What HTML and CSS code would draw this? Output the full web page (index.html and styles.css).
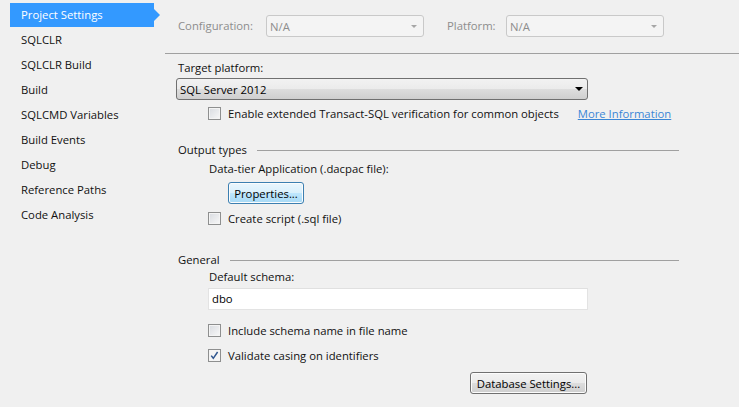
FILE: index.html
```html
<!DOCTYPE html>
<html>
<head>
<meta charset="utf-8">
<link rel="stylesheet" href="styles.css">
</head>
<body>
<div class="app">
  <nav class="sidebar">
    <div class="nav-item selected">Project Settings</div>
    <div class="nav-item">SQLCLR</div>
    <div class="nav-item">SQLCLR Build</div>
    <div class="nav-item">Build</div>
    <div class="nav-item">SQLCMD Variables</div>
    <div class="nav-item">Build Events</div>
    <div class="nav-item">Debug</div>
    <div class="nav-item">Reference Paths</div>
    <div class="nav-item">Code Analysis</div>
  </nav>
  <main class="main">
    <div class="topbar">
      <span class="top-label conf-label">Configuration:</span>
      <div class="combo disabled"><span class="combo-text">N/A</span><span class="arrow small"></span></div>
      <span class="top-label plat-label">Platform:</span>
      <div class="combo disabled"><span class="combo-text">N/A</span><span class="arrow small"></span></div>
    </div>
    <div class="content">
      <div class="label target-label">Target platform:</div>
      <div class="combo target"><span class="combo-text">SQL Server 2012</span><span class="arrow big"></span></div>
      <div class="check-row verify-row">
        <span class="checkbox"></span>
        <span class="check-text">Enable extended Transact-SQL verification for common objects</span>
        <a class="link">More Information</a>
      </div>

      <div class="section-head output-head"><span class="section-title">Output types</span><span class="rule"></span></div>
      <div class="label sub-label dacpac-label">Data-tier Application (.dacpac file):</div>
      <button class="btn focused props-btn">Properties...</button>
      <div class="check-row script-row">
        <span class="checkbox"></span>
        <span class="check-text">Create script (.sql file)</span>
      </div>

      <div class="section-head general-head"><span class="section-title">General</span><span class="rule"></span></div>
      <div class="label sub-label schema-label">Default schema:</div>
      <div class="textbox">dbo</div>
      <div class="check-row include-row">
        <span class="checkbox"></span>
        <span class="check-text">Include schema name in file name</span>
      </div>
      <div class="check-row validate-row">
        <span class="checkbox checked"><svg width="11" height="11" viewBox="0 0 11 11"><path d="M2.2 5.6 L4.3 8.3 L8.6 2" fill="none" stroke="#2f568f" stroke-width="1.5"/></svg></span>
        <span class="check-text">Validate casing on identifiers</span>
      </div>
      <button class="btn db-btn">Database Settings...</button>
    </div>
  </main>
</div>
</body>
</html>
```

FILE: styles.css
```css
html, body {
  margin: 0;
  padding: 0;
}
body {
  background: #f0f0f0;
  font-family: "Open Sans", "Noto Sans", sans-serif;
  font-size: 11.3px;
  color: #111;
  width: 739px;
  height: 407px;
  overflow: hidden;
}
.app {
  display: flex;
  height: 407px;
}
.sidebar {
  width: 165px;
  flex: none;
  padding-top: 3px;
}
.nav-item {
  height: 25px;
  line-height: 24px;
  padding-left: 21px;
}
.nav-item.selected {
  position: relative;
  margin-left: 10px;
  padding-left: 11px;
  width: 133px;
  height: 24px;
  margin-bottom: 1px;
  background: #3399ff;
  color: #fff;
}
.nav-item.selected::after {
  content: "";
  position: absolute;
  left: 144px;
  top: 6px;
  border-left: 6px solid #3399ff;
  border-top: 6px solid transparent;
  border-bottom: 6px solid transparent;
}
.main {
  flex: 1;
}
.topbar {
  height: 38px;
  padding-top: 15px;
  padding-left: 13px;
  border-bottom: 1px solid #a0a0a0;
  display: flex;
  align-items: flex-start;
}
.top-label {
  color: #8d8d8d;
  line-height: 22px;
}
.conf-label { width: 88px; }
.plat-label { width: 59px; margin-left: 23px; }
.combo {
  box-sizing: border-box;
  height: 22px;
  display: flex;
  align-items: center;
  border-radius: 3px;
}
.combo.disabled {
  width: 158px;
  border: 1px solid #c9c9c9;
  background: #f4f4f4;
  color: #8d8d8d;
  padding-left: 3px;
  padding-right: 6px;
}
.combo-text { flex: 1; }
.arrow {
  width: 0;
  height: 0;
  border-left: 3px solid transparent;
  border-right: 3px solid transparent;
  border-top: 3px solid #a6a6a6;
}
.arrow.big {
  border-left-width: 4px;
  border-right-width: 4px;
  border-top: 4px solid #000;
}
.content {
  padding-left: 13px;
  display: flex;
  flex-direction: column;
  align-items: flex-start;
}
.label {
  line-height: 16px;
}
.target-label { margin-top: 6px; }
.combo.target {
  margin-top: 2px;
  margin-left: -2px;
  width: 412px;
  border: 1px solid #707070;
  background: linear-gradient(#f2f2f2, #ebebeb 50%, #dddddd 51%, #cfcfcf);
  padding-left: 3px;
  padding-right: 4px;
  color: #000;
}
.check-row {
  display: flex;
  align-items: center;
  height: 16px;
  padding-left: 30px;
}
.checkbox {
  box-sizing: border-box;
  width: 13px;
  height: 13px;
  border: 1px solid #8e8f8f;
  background: linear-gradient(135deg, #d8dbe0, #f8f8f8);
  box-shadow: inset 0 0 0 1px #f4f4f4;
  flex: none;
  display: flex;
  align-items: center;
  justify-content: center;
}
.checkbox.checked {
  background: #f4f4f4;
}
.check-text { margin-left: 7px; }
.link {
  margin-left: 19px;
  color: #3b86d6;
  text-decoration: underline;
}
.verify-row { margin-top: 5px; }
.section-head {
  display: flex;
  align-items: center;
  width: 501px;
  height: 16px;
}
.section-title { line-height: 16px; }
.rule {
  flex: 1;
  border-top: 1px solid #a0a0a0;
  margin-left: 10px;
}
.output-head { margin-top: 21px; }
.sub-label { margin-left: 31px; }
.dacpac-label { margin-top: 3px; }
.btn {
  box-sizing: border-box;
  height: 22px;
  font-family: inherit;
  font-size: inherit;
  color: #000;
  border: 1px solid #707070;
  border-radius: 3px;
  background: linear-gradient(#f2f2f2, #ebebeb 50%, #dddddd 51%, #cfcfcf);
  box-shadow: inset 0 0 0 1px #fcfcfc;
  padding: 0;
}
.btn.focused {
  border-color: #3c7fb1;
  background: linear-gradient(#eaf6fd, #d9f0fc 50%, #bee6fd 51%, #a7d9f5);
}
.props-btn {
  margin-top: 5px;
  margin-left: 50px;
  width: 76px;
}
.script-row { margin-top: 6px; }
.general-head { margin-top: 26px; }
.schema-label { margin-top: 1px; }
.textbox {
  box-sizing: border-box;
  margin-top: 3px;
  margin-left: 30px;
  width: 380px;
  height: 22px;
  line-height: 20px;
  background: #fff;
  border: 1px solid #e3e3e3;
  border-top-color: #e0e0e0;
  padding-left: 3px;
  color: #000;
}
.include-row { margin-top: 12px; }
.validate-row { margin-top: 9px; }
.db-btn {
  margin-top: 9px;
  margin-left: 292px;
  width: 117px;
}
```
